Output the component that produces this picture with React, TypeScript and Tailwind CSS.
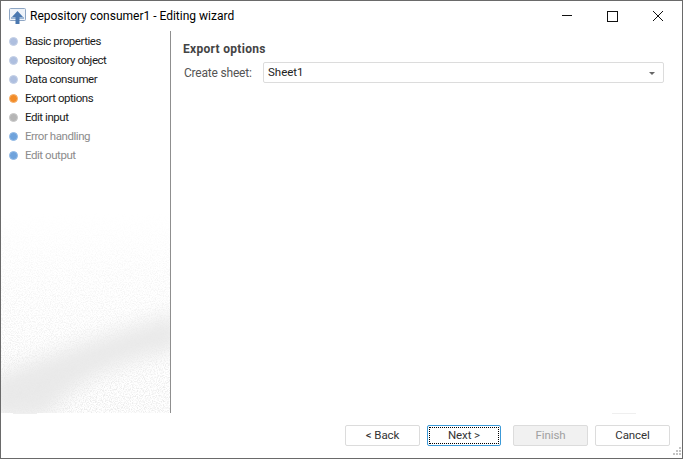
const font = { fontFamily: 'Roboto, "Noto Sans", sans-serif' };

const steps = [
  { label: "Basic properties", dot: "bg-[#aebfdf] border-[#c4d0e6]", text: "text-[#1a1a1a]" },
  { label: "Repository object", dot: "bg-[#aebfdf] border-[#c4d0e6]", text: "text-[#1a1a1a]" },
  { label: "Data consumer", dot: "bg-[#aebfdf] border-[#c4d0e6]", text: "text-[#1a1a1a]" },
  { label: "Export options", dot: "bg-[#f28c28] border-[#f7b26e]", text: "text-[#1a1a1a]" },
  { label: "Edit input", dot: "bg-[#b5b5b5] border-[#c8c8c8]", text: "text-[#1a1a1a]" },
  { label: "Error handling", dot: "bg-[#6fa3dc] border-[#94bbe6]", text: "text-[#8c8c8c]" },
  { label: "Edit output", dot: "bg-[#6fa3dc] border-[#94bbe6]", text: "text-[#8c8c8c]" },
];

function Texture() {
  return (
    <svg className="absolute bottom-0 left-0" width="169" height="200" viewBox="0 0 169 200">
      <defs>
        <filter id="grain" x="0" y="0" width="100%" height="100%">
          <feTurbulence type="fractalNoise" baseFrequency="0.85" numOctaves="2" seed="7" />
          <feColorMatrix values="0 0 0 0 0.82  0 0 0 0 0.82  0 0 0 0 0.82  3.4 0 0 0 -1.45" />
        </filter>
        <linearGradient id="fade" x1="0" y1="0" x2="0" y2="1">
          <stop offset="0" stopColor="#000" />
          <stop offset="0.3" stopColor="#666" />
          <stop offset="1" stopColor="#eee" />
        </linearGradient>
        <filter id="soft"><feGaussianBlur stdDeviation="10" /></filter>
        <mask id="m"><rect width="169" height="200" fill="url(#fade)" /></mask>
      </defs>
      <path d="M-10 165 C30 150 90 125 180 100 L180 135 C110 150 70 170 45 205 L-10 205 Z" fill="#e9e9e9" filter="url(#soft)" />
      <rect width="169" height="200" filter="url(#grain)" mask="url(#m)" />
    </svg>
  );
}

function Btn({ children, className = "" }: { children: React.ReactNode; className?: string }) {
  return (
    <div className={`h-[21px] flex items-center justify-center rounded-[2px] border text-[11.5px] tracking-[-0.1px] pt-[1px] ${className}`}>
      {children}
    </div>
  );
}

export default function App() {
  return (
    <div style={font} className="w-[683px] h-[459px] bg-white border border-[#6a6a6a] flex flex-col relative overflow-hidden">
      <div className="h-[30px] shrink-0 flex items-center">
        <svg className="ml-[8px]" width="17" height="17" viewBox="0 0 17 17">
          <rect x="0.5" y="0.5" width="16" height="12" rx="1" fill="#eef3f9" stroke="#8ea6c4" />
          <rect x="2" y="9" width="13" height="2" fill="#9db6d4" />
          <path d="M8.5 3 L14 9 H10.5 V16 H6.5 V9 H3 Z" fill="#4a78b0" />
        </svg>
        <span className="ml-[4px] text-[12px] text-black">Repository consumer1 - Editing wizard</span>
        <div className="ml-auto flex items-center">
          <svg width="12" height="12" viewBox="0 0 12 12" className="mr-[34px]"><path d="M1 5.5H11" stroke="#111" /></svg>
          <svg width="11" height="11" viewBox="0 0 11 11" className="mr-[34px]"><rect x="0.5" y="0.5" width="10" height="10" fill="none" stroke="#111" /></svg>
          <svg width="12" height="12" viewBox="0 0 12 12" className="mr-[18px]"><path d="M1 1L11 11M11 1L1 11" stroke="#111" /></svg>
        </div>
      </div>
      <div className="h-[382px] flex shrink-0">
        <div className="w-[170px] shrink-0 border-r border-[#8f8f8f] relative pt-[1px]">
          <Texture />
          <div className="relative flex flex-col">
            {steps.map((s) => (
              <div key={s.label} className="h-[19px] flex items-center">
                <span className={`ml-[8px] w-[9px] h-[9px] rounded-full border ${s.dot}`} />
                <span className={`ml-[7px] text-[11.5px] tracking-[-0.45px] ${s.text}`}>{s.label}</span>
              </div>
            ))}
          </div>
        </div>
        <div className="flex-1 pl-[12px] pr-[18px] pt-[10px]">
          <div className="text-[12px] font-bold tracking-[0.3px] text-[#444444] h-[16px] flex items-center">Export options</div>
          <div className="flex items-center mt-[5px]">
            <span className="w-[80px] pl-[1px] text-[12px] tracking-[-0.2px] text-[#555555]">Create sheet:</span>
            <div className="flex-1 h-[21px] border border-[#dcdcdc] rounded-[2px] flex items-center pl-[4px] pr-[8px] pt-[1px] text-[11.5px] text-[#222222]">
              Sheet1
              <svg className="ml-auto" width="6" height="3" viewBox="0 0 6 3"><path d="M0 0H6L3 3Z" fill="#666" /></svg>
            </div>
          </div>
        </div>
      </div>
      <div className="flex-1 flex items-start pt-[12px] relative">
        <span className="absolute left-[12px] top-0 w-[24px] h-px bg-[#efefef]" />
        <span className="absolute left-[611px] top-0 w-[24px] h-px bg-[#efefef]" />
        <Btn className="ml-[344px] w-[75px] border-[#dcdcdc] text-[#333333]">&lt; Back</Btn>
        <Btn className="ml-[7px] w-[74px] border-[#3c9ad8] text-[#333333] p-[1px]">
          <span className="w-full h-full flex items-center justify-center border border-dotted border-black">Next &gt;</span>
        </Btn>
        <Btn className="ml-[12px] w-[75px] border-[#dcdcdc] bg-[#f1f1f1] text-[#a0a0a0]">Finish</Btn>
        <Btn className="ml-[7px] w-[75px] border-[#dcdcdc] text-[#333333]">Cancel</Btn>
      </div>
      <svg className="absolute right-0 bottom-0" width="12" height="12" viewBox="0 0 12 12">
        <g fill="#c4c4c4">
          <rect x="9" y="1" width="2" height="2" /><rect x="6" y="4" width="2" height="2" /><rect x="9" y="4" width="2" height="2" />
          <rect x="3" y="7" width="2" height="2" /><rect x="6" y="7" width="2" height="2" /><rect x="9" y="7" width="2" height="2" />
        </g>
      </svg>
    </div>
  );
}
